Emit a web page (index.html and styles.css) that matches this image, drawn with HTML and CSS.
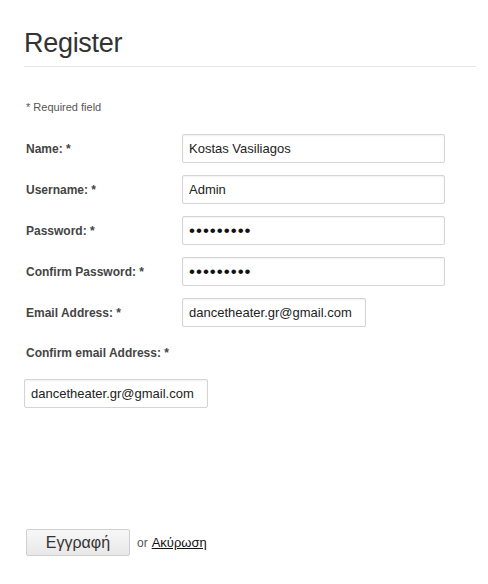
FILE: index.html
```html
<!DOCTYPE html>
<html lang="el">
<head>
<meta charset="utf-8">
<title>Register</title>
<link rel="stylesheet" href="styles.css">
</head>
<body>
<div class="page">
  <h1 class="title">Register</h1>
  <p class="note">* Required field</p>
  <form class="form">
    <div class="row">
      <label class="label">Name: *</label>
      <input class="field wide" type="text" value="Kostas Vasiliagos">
    </div>
    <div class="row">
      <label class="label">Username: *</label>
      <input class="field wide" type="text" value="Admin">
    </div>
    <div class="row">
      <label class="label">Password: *</label>
      <input class="field wide pw" type="password" value="123456789">
    </div>
    <div class="row">
      <label class="label">Confirm Password: *</label>
      <input class="field wide pw" type="password" value="123456789">
    </div>
    <div class="row">
      <label class="label">Email Address: *</label>
      <input class="field narrow" type="text" value="dancetheater.gr@gmail.com">
    </div>
    <div class="stack">
      <label class="label">Confirm email Address: *</label>
      <input class="field narrow" type="text" value="dancetheater.gr@gmail.com">
    </div>
    <div class="actions">
      <button class="btn" type="button">Εγγραφή</button>
      <span class="or">or</span>
      <a class="cancel" href="#">Ακύρωση</a>
    </div>
  </form>
</div>
</body>
</html>
```
FILE: styles.css
```css
html, body {
  margin: 0;
  padding: 0;
  background: #fff;
}
body {
  font-family: "Liberation Sans", Arial, sans-serif;
  color: #333;
}
.page {
  padding: 26px 12px 0 24px;
}
.title {
  margin: 0;
  font-size: 27px;
  font-weight: normal;
  line-height: 34px;
  letter-spacing: -0.3px;
  color: #333;
  padding-bottom: 6px;
  border-bottom: 1px solid #e6e6e6;
}
.note {
  margin: 34px 0 0 2px;
  font-size: 11px;
  line-height: 13px;
  color: #555;
}
.form {
  margin-top: 20px;
  display: flex;
  flex-direction: column;
}
.row {
  display: flex;
  align-items: center;
  height: 29px;
  margin-bottom: 12px;
}
.label {
  width: 158px;
  flex: none;
  padding-left: 2px;
  box-sizing: border-box;
  font-size: 12px;
  font-weight: bold;
  color: #444;
}
.field {
  box-sizing: border-box;
  height: 29px;
  padding: 0 6px;
  border: 1px solid #d4d4d4;
  border-radius: 2px;
  box-shadow: inset 0 1px 2px rgba(0, 0, 0, 0.06);
  background: #fff;
  font-family: "Liberation Sans", Arial, sans-serif;
  font-size: 13px;
  color: #222;
  outline: none;
}
.wide {
  width: 263px;
}
.narrow {
  width: 184px;
}
.pw {
  letter-spacing: 1px;
  font-size: 17px;
  color: #111;
}
.stack {
  display: flex;
  flex-direction: column;
  align-items: flex-start;
  margin-top: 7px;
}
.stack .field {
  margin-top: 19px;
}
.actions {
  margin-top: 121px;
  display: flex;
  align-items: center;
  padding-left: 2px;
}
.btn {
  width: 104px;
  height: 27px;
  border: 1px solid #cfcfcf;
  border-radius: 2px;
  background: linear-gradient(#f7f7f7, #e8e8e8);
  font-family: "Liberation Sans", Arial, sans-serif;
  font-size: 16px;
  color: #333;
  padding: 0;
}
.or {
  margin-left: 7px;
  font-size: 12px;
  color: #555;
}
.cancel {
  margin-left: 4px;
  font-size: 13px;
  color: #111;
  text-decoration: underline;
}
```
